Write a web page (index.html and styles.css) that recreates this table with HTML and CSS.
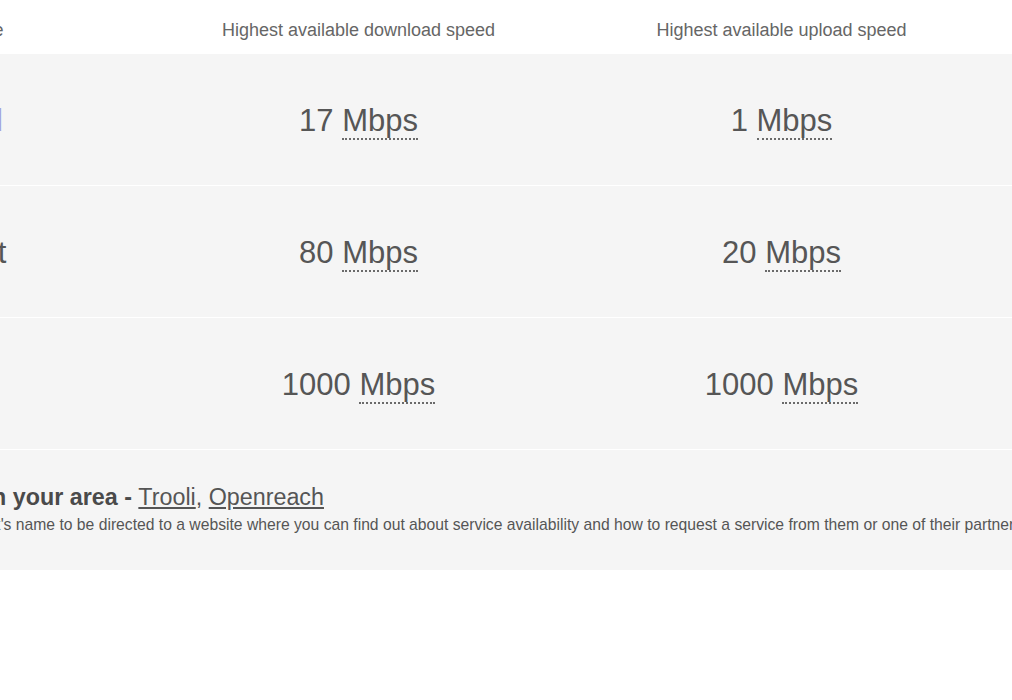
FILE: index.html
```html
<!DOCTYPE html>
<html lang="en">
<head>
<meta charset="utf-8">
<title>Broadband speeds</title>
<link rel="stylesheet" href="styles.css">
</head>
<body>
<div class="viewport">
  <div class="speeds">
    <div class="row head">
      <div class="cell">Broadband type</div>
      <div class="cell">Highest available download speed</div>
      <div class="cell">Highest available upload speed</div>
    </div>
    <div class="row">
      <div class="cell label"><a class="tech-link" href="#">Standard</a></div>
      <div class="cell speed">17 <abbr title="Megabits per second">Mbps</abbr></div>
      <div class="cell speed">1 <abbr title="Megabits per second">Mbps</abbr></div>
    </div>
    <div class="row">
      <div class="cell label">Superfast</div>
      <div class="cell speed">80 <abbr title="Megabits per second">Mbps</abbr></div>
      <div class="cell speed">20 <abbr title="Megabits per second">Mbps</abbr></div>
    </div>
    <div class="row">
      <div class="cell label">Ultrafast</div>
      <div class="cell speed">1000 <abbr title="Megabits per second">Mbps</abbr></div>
      <div class="cell speed">1000 <abbr title="Megabits per second">Mbps</abbr></div>
    </div>
    <div class="networks">
      <h2 class="networks-title">Full fibre networks in your area - <span class="network-links"><a href="#">Trooli</a>, <a href="#">Openreach</a></span></h2>
      <p class="networks-note">Click on the broadband network's name to be directed to a website where you can find out about service availability and how to request a service from them or one of their partners.</p>
    </div>
  </div>
</div>
</body>
</html>
```

FILE: styles.css
```css
html, body {
  margin: 0;
  padding: 0;
  background: #ffffff;
}

body {
  font-family: "Liberation Sans", Arial, sans-serif;
  color: #555555;
  overflow: hidden;
  width: 1012px;
  height: 700px;
}

.viewport {
  width: 1012px;
  overflow: hidden;
}

.speeds {
  margin-left: -267px;
  width: 1500px;
}

.row {
  display: grid;
  grid-template-columns: 414px 423px 423px 1fr;
  align-items: center;
  min-height: 131px;
  background: #f5f5f5;
  border-bottom: 1px solid #ffffff;
}

.row.head {
  min-height: 0;
  background: #ffffff;
  border-bottom: 0;
  padding: 20px 0 13px;
  font-size: 18px;
  line-height: 21px;
  color: #666666;
}

.cell {
  text-align: center;
  white-space: nowrap;
}

.label,
.speed {
  font-size: 31px;
  line-height: 36px;
  padding-top: 2px;
  color: #565656;
}

.tech-link {
  color: #a3a3dc;
  text-decoration: none;
}

abbr {
  text-decoration: none;
  border-bottom: 2px dotted #6a6a6a;
}

.networks {
  background: #f5f5f5;
  padding: 34px 0 36px 39px;
}

.networks-title {
  margin: 0;
  font-size: 23.3px;
  line-height: 27px;
  font-weight: bold;
  color: #4a4a4a;
  white-space: nowrap;
}

.network-links {
  font-weight: normal;
  color: #555555;
}

.network-links a {
  color: #555555;
  text-decoration: underline;
}

.networks-note {
  margin: 5px 0 0;
  padding-left: 8px;
  font-size: 15.7px;
  line-height: 18px;
  color: #555555;
  white-space: nowrap;
}
```
